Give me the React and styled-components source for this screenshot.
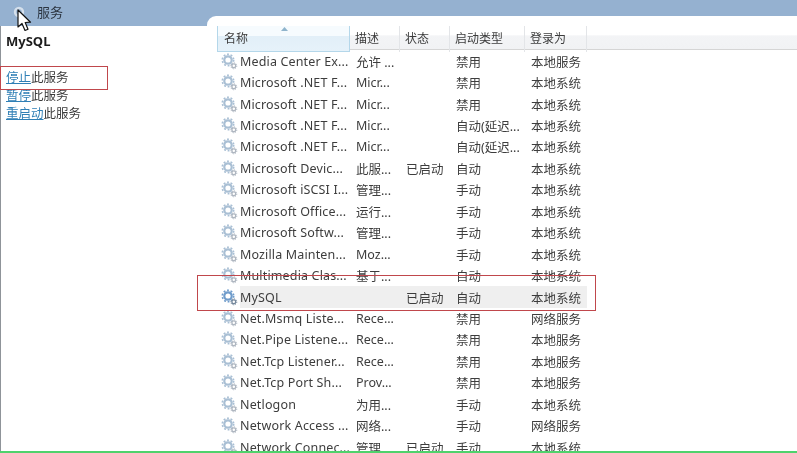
import React from "react";
import styled, { createGlobalStyle } from "styled-components";

const COLUMNS = "133px 50px 50px 75px 62px 1fr";
const FONT = '"Noto Sans", "Noto Sans CJK SC", sans-serif';

const services = [
  { name: "Media Center Ex...", desc: "允许 ...", state: "", start: "禁用", login: "本地服务" },
  { name: "Microsoft .NET F...", desc: "Micr...", state: "", start: "禁用", login: "本地系统" },
  { name: "Microsoft .NET F...", desc: "Micr...", state: "", start: "禁用", login: "本地系统" },
  { name: "Microsoft .NET F...", desc: "Micr...", state: "", start: "自动(延迟...", login: "本地系统" },
  { name: "Microsoft .NET F...", desc: "Micr...", state: "", start: "自动(延迟...", login: "本地系统" },
  { name: "Microsoft Devic...", desc: "此服...", state: "已启动", start: "自动", login: "本地系统" },
  { name: "Microsoft iSCSI I...", desc: "管理...", state: "", start: "手动", login: "本地系统" },
  { name: "Microsoft Office...", desc: "运行...", state: "", start: "手动", login: "本地系统" },
  { name: "Microsoft Softw...", desc: "管理...", state: "", start: "手动", login: "本地系统" },
  { name: "Mozilla Mainten...", desc: "Moz...", state: "", start: "手动", login: "本地系统" },
  { name: "Multimedia Clas...", desc: "基于...", state: "", start: "自动", login: "本地系统" },
  { name: "MySQL", desc: "", state: "已启动", start: "自动", login: "本地系统", selected: true },
  { name: "Net.Msmq Liste...", desc: "Rece...", state: "", start: "禁用", login: "网络服务" },
  { name: "Net.Pipe Listene...", desc: "Rece...", state: "", start: "禁用", login: "本地服务" },
  { name: "Net.Tcp Listener...", desc: "Rece...", state: "", start: "禁用", login: "本地服务" },
  { name: "Net.Tcp Port Sh...", desc: "Prov...", state: "", start: "禁用", login: "本地服务" },
  { name: "Netlogon", desc: "为用...", state: "", start: "手动", login: "本地系统" },
  { name: "Network Access ...", desc: "网络...", state: "", start: "手动", login: "网络服务" },
  { name: "Network Connec...", desc: "管理...", state: "已启动", start: "手动", login: "本地系统" }
];

const GlobalStyle = createGlobalStyle`
  html, body {
    margin: 0;
    padding: 0;
    background: #fff;
  }
  #root {
    width: 797px;
    height: 453px;
    overflow: hidden;
  }
`;

const Window = styled.div`
  position: relative;
  width: 797px;
  height: 453px;
  overflow: hidden;
  display: flex;
  flex-direction: column;
  background: #95b1d0;
  font-family: ${FONT};
  color: #333;
  filter: blur(0.4px);
`;

const TitleBar = styled.div`
  flex: 0 0 26px;
  display: flex;
  align-items: center;
  gap: 12px;
  padding: 0 0 3px 13px;
  font-size: 13px;
  color: #2b3440;
  box-sizing: border-box;
`;

const Body = styled.div`
  flex: 1;
  position: relative;
  display: flex;
  background: #fff;
  border-left: 1px solid #8f9499;
`;

const Sidebar = styled.aside`
  flex: 0 0 206px;
  box-sizing: border-box;
  padding: 6px 0 0 5px;
`;

const ServiceName = styled.h2`
  margin: 0 0 19px;
  font-size: 13px;
  line-height: 18px;
  font-weight: 700;
  color: #1c1c1c;
`;

const ActionLine = styled.div`
  font-size: 12.5px;
  line-height: 18px;
  color: #3a3a3a;
`;

const ActionLink = styled.a`
  color: #2f7fb5;
  text-decoration: underline;
`;

const Main = styled.main`
  flex: 1;
  margin-top: -10px;
  padding: 10px 0 0 10px;
  height: 437px;
  background: #fff;
  border-top-left-radius: 9px;
  overflow: hidden;
  position: relative;
`;

const HeaderRow = styled.div`
  display: grid;
  grid-template-columns: ${COLUMNS};
  height: 24px;
  box-sizing: border-box;
  background: linear-gradient(#ffffff 0%, #ffffff 40%, #f3f4f6 42%, #f1f2f4 100%);
  border-bottom: 1px solid #d5d5d5;
`;

const HeaderCell = styled.div`
  position: relative;
  padding-left: ${p => (p.$first ? 6 : 5)}px;
  font-size: 12px;
  line-height: 25px;
  color: #3c3c3c;
  box-sizing: border-box;
  border-right: 1px solid #e3e5e8;
  ${p =>
    p.$sorted &&
    `
    background: linear-gradient(#f6fbfe 0%, #f6fbfe 40%, #e2eff8 42%, #e6f2fa 100%);
    border-left: 1px solid #b4d7ea;
    border-right: 1px solid #b4d7ea;
    border-bottom: 1px solid #b4d7ea;
  `}
  ${p => p.$last && "border-right: none;"}
`;

const SortArrow = styled.svg`
  position: absolute;
  left: 62px;
  top: 0;
`;

const RowList = styled.div`
  padding-top: 0.5px;
`;

const Row = styled.div`
  display: grid;
  grid-template-columns: ${COLUMNS};
  height: 21.44px;
  align-items: center;
  font-size: 12.5px;
  color: #3d3d3d;
`;

const NameCell = styled.div`
  display: flex;
  align-items: center;
  gap: 2px;
  padding-left: 4px;
  white-space: nowrap;
  min-width: 0;
`;

const RowBody = styled.div`
  grid-column: 2 / span 4;
  display: grid;
  grid-template-columns: 50px 50px 75px 62px;
  align-items: center;
  height: 100%;
  background: ${p => (p.$selected ? "#efefef" : "transparent")};
`;

const NameText = styled.span`
  display: inline-flex;
  align-items: center;
  height: 21.44px;
  flex: 1;
  letter-spacing: 0.15px;
  background: ${p => (p.$selected ? "#efefef" : "transparent")};
`;

const Cell = styled.div`
  padding-left: 6px;
  white-space: nowrap;
  overflow: hidden;
`;

const Callout = styled.div`
  position: absolute;
  left: ${p => p.$x}px;
  top: ${p => p.$y}px;
  width: ${p => p.$w}px;
  height: ${p => p.$h}px;
  box-sizing: border-box;
  border: 1.5px solid #c0474c;
  pointer-events: none;
`;

const Cursor = styled.svg`
  position: absolute;
  left: 17px;
  top: 9px;
`;

const GreenEdge = styled.div`
  position: absolute;
  left: 0;
  right: 0;
  bottom: 0;
  height: 2px;
  background: #4fd26c;
`;

const GearSvg = styled.svg`
  flex: none;
`;

const GearIcon = ({ active }) => (
  <GearSvg width="17" height="17" viewBox="0 0 17 17">
    <g fill="none" stroke={active ? "#6f9ccb" : "#a9bfd4"}>
      <circle cx="7" cy="7" r="3.7" strokeWidth="2.2" />
      <circle cx="7" cy="7" r="5.7" strokeWidth="1.6" strokeDasharray="1.9 1.7" />
    </g>
    <g fill="none" stroke={active ? "#75889c" : "#aeb6c0"}>
      <circle cx="12.8" cy="12.8" r="1.9" strokeWidth="1.3" />
      <circle cx="12.8" cy="12.8" r="3" strokeWidth="1" strokeDasharray="1.2 1.1" />
    </g>
  </GearSvg>
);

const App = () => (
  <Window>
    <GlobalStyle />
    <TitleBar>
      <svg width="12" height="14" viewBox="0 0 12 14">
        <circle cx="6" cy="7" r="4" fill="none" stroke="#d5e0ec" strokeWidth="2.4" />
      </svg>
      <span>服务</span>
    </TitleBar>
    <Body>
      <Sidebar>
        <ServiceName>MySQL</ServiceName>
        <ActionLine>
          <ActionLink>停止</ActionLink>此服务
        </ActionLine>
        <ActionLine>
          <ActionLink>暂停</ActionLink>此服务
        </ActionLine>
        <ActionLine>
          <ActionLink>重启动</ActionLink>此服务
        </ActionLine>
      </Sidebar>
      <Main>
        <HeaderRow>
          <HeaderCell $first $sorted>
            名称
            <SortArrow width="9" height="6" viewBox="0 0 9 6">
              <path d="M1 5 L4.5 1 L8 5 Z" fill="#8fb4cc" />
            </SortArrow>
          </HeaderCell>
          <HeaderCell>描述</HeaderCell>
          <HeaderCell>状态</HeaderCell>
          <HeaderCell>启动类型</HeaderCell>
          <HeaderCell>登录为</HeaderCell>
          <HeaderCell $last />
        </HeaderRow>
        <RowList>
          {services.map((s, i) => (
            <Row key={i}>
              <NameCell>
                <GearIcon active={s.selected} />
                <NameText $selected={s.selected}>{s.name}</NameText>
              </NameCell>
              <RowBody $selected={s.selected}>
                <Cell>{s.desc}</Cell>
                <Cell>{s.state}</Cell>
                <Cell>{s.start}</Cell>
                <Cell>{s.login}</Cell>
              </RowBody>
            </Row>
          ))}
        </RowList>
      </Main>
    </Body>
    <Callout $x={0} $y={66} $w={108} $h={24} />
    <Callout $x={197} $y={275} $w={399} $h={36} />
    <Cursor width="16" height="24" viewBox="0 0 16 24">
      <path
        d="M1 1 L1 18 L5 14.5 L8 21.5 L11 20.2 L8.2 13.5 L13.5 13.2 Z"
        fill="#fff"
        stroke="#111"
        strokeWidth="1.2"
        strokeLinejoin="round"
      />
    </Cursor>
    <GreenEdge />
  </Window>
);

export default App;
